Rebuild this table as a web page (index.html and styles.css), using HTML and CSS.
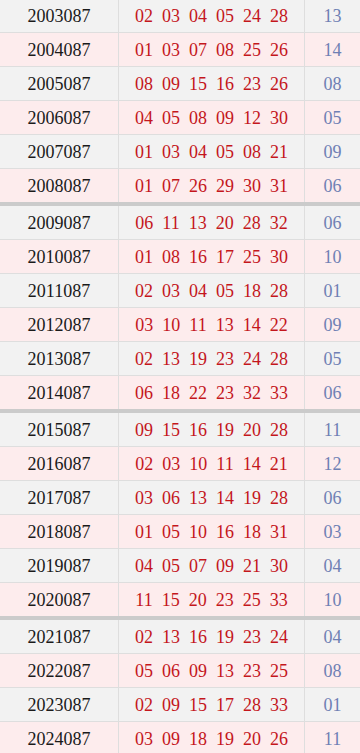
FILE: index.html
```html
<!DOCTYPE html>
<html lang="zh">
<head>
<meta charset="utf-8">
<title>历史同期开奖</title>
<link rel="stylesheet" href="styles.css">
</head>
<body>
<div class="list">
  <div class="group">
    <div class="row"><div class="issue">2003087</div><div class="reds"><span>02</span><span>03</span><span>04</span><span>05</span><span>24</span><span>28</span></div><div class="blue">13</div></div>
    <div class="row"><div class="issue">2004087</div><div class="reds"><span>01</span><span>03</span><span>07</span><span>08</span><span>25</span><span>26</span></div><div class="blue">14</div></div>
    <div class="row"><div class="issue">2005087</div><div class="reds"><span>08</span><span>09</span><span>15</span><span>16</span><span>23</span><span>26</span></div><div class="blue">08</div></div>
    <div class="row"><div class="issue">2006087</div><div class="reds"><span>04</span><span>05</span><span>08</span><span>09</span><span>12</span><span>30</span></div><div class="blue">05</div></div>
    <div class="row"><div class="issue">2007087</div><div class="reds"><span>01</span><span>03</span><span>04</span><span>05</span><span>08</span><span>21</span></div><div class="blue">09</div></div>
    <div class="row"><div class="issue">2008087</div><div class="reds"><span>01</span><span>07</span><span>26</span><span>29</span><span>30</span><span>31</span></div><div class="blue">06</div></div>
  </div>
  <div class="group">
    <div class="row"><div class="issue">2009087</div><div class="reds"><span>06</span><span>11</span><span>13</span><span>20</span><span>28</span><span>32</span></div><div class="blue">06</div></div>
    <div class="row"><div class="issue">2010087</div><div class="reds"><span>01</span><span>08</span><span>16</span><span>17</span><span>25</span><span>30</span></div><div class="blue">10</div></div>
    <div class="row"><div class="issue">2011087</div><div class="reds"><span>02</span><span>03</span><span>04</span><span>05</span><span>18</span><span>28</span></div><div class="blue">01</div></div>
    <div class="row"><div class="issue">2012087</div><div class="reds"><span>03</span><span>10</span><span>11</span><span>13</span><span>14</span><span>22</span></div><div class="blue">09</div></div>
    <div class="row"><div class="issue">2013087</div><div class="reds"><span>02</span><span>13</span><span>19</span><span>23</span><span>24</span><span>28</span></div><div class="blue">05</div></div>
    <div class="row"><div class="issue">2014087</div><div class="reds"><span>06</span><span>18</span><span>22</span><span>23</span><span>32</span><span>33</span></div><div class="blue">06</div></div>
  </div>
  <div class="group">
    <div class="row"><div class="issue">2015087</div><div class="reds"><span>09</span><span>15</span><span>16</span><span>19</span><span>20</span><span>28</span></div><div class="blue">11</div></div>
    <div class="row"><div class="issue">2016087</div><div class="reds"><span>02</span><span>03</span><span>10</span><span>11</span><span>14</span><span>21</span></div><div class="blue">12</div></div>
    <div class="row"><div class="issue">2017087</div><div class="reds"><span>03</span><span>06</span><span>13</span><span>14</span><span>19</span><span>28</span></div><div class="blue">06</div></div>
    <div class="row"><div class="issue">2018087</div><div class="reds"><span>01</span><span>05</span><span>10</span><span>16</span><span>18</span><span>31</span></div><div class="blue">03</div></div>
    <div class="row"><div class="issue">2019087</div><div class="reds"><span>04</span><span>05</span><span>07</span><span>09</span><span>21</span><span>30</span></div><div class="blue">04</div></div>
    <div class="row"><div class="issue">2020087</div><div class="reds"><span>11</span><span>15</span><span>20</span><span>23</span><span>25</span><span>33</span></div><div class="blue">10</div></div>
  </div>
  <div class="group">
    <div class="row"><div class="issue">2021087</div><div class="reds"><span>02</span><span>13</span><span>16</span><span>19</span><span>23</span><span>24</span></div><div class="blue">04</div></div>
    <div class="row"><div class="issue">2022087</div><div class="reds"><span>05</span><span>06</span><span>09</span><span>13</span><span>23</span><span>25</span></div><div class="blue">08</div></div>
    <div class="row"><div class="issue">2023087</div><div class="reds"><span>02</span><span>09</span><span>15</span><span>17</span><span>28</span><span>33</span></div><div class="blue">01</div></div>
    <div class="row"><div class="issue">2024087</div><div class="reds"><span>03</span><span>09</span><span>18</span><span>19</span><span>20</span><span>26</span></div><div class="blue">11</div></div>
  </div>
</div>
</body>
</html>
```
FILE: styles.css
```css
html, body {
  margin: 0;
  padding: 0;
  background: #ffffff;
}
body {
  font-family: "Liberation Serif", "Noto Sans CJK SC", serif;
  font-size: 18px;
  overflow: hidden;
}
.list {
  margin-top: -1px;
  width: 360px;
}
.group {
  border-bottom: 4px solid #cbcbcb;
}
.row {
  display: grid;
  grid-template-columns: 119px 186px 55px;
  height: 33px;
  border-bottom: 1px solid #dedede;
  background: #f2f2f2;
}
.row:nth-child(even) {
  background: #fdeced;
}
.group .row:last-child {
  border-bottom: none;
}
.issue, .reds, .blue {
  display: flex;
  align-items: center;
  justify-content: center;
  line-height: 1;
}
.issue {
  border-right: 1px solid #dedede;
  color: #1a1a1a;
}
.reds {
  border-right: 1px solid #dedede;
  color: #c4161c;
  gap: 9px;
}
.blue {
  color: #6f80b4;
}
```
